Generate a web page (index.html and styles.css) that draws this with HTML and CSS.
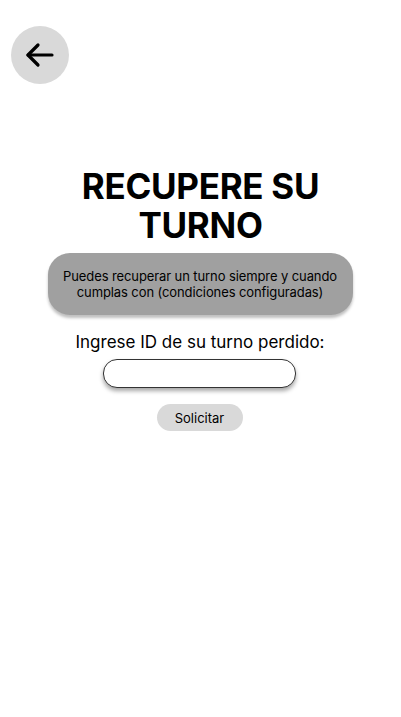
FILE: index.html
```html
<!DOCTYPE html>
<html lang="es">
<head>
<meta charset="utf-8">
<title>Recupere su turno</title>
<link rel="stylesheet" href="styles.css">
</head>
<body>
<div class="page">
  <header class="top">
    <button class="back" aria-label="Volver">
      <svg width="36" height="36" viewBox="0 0 36 36" fill="none" stroke="#000" stroke-width="3.2" stroke-linecap="round" stroke-linejoin="round">
        <path d="M30 18H6"/>
        <path d="M16 8L6 18l10 10"/>
      </svg>
    </button>
  </header>
  <main class="content">
    <h1 class="title">RECUPERE SU<br>TURNO</h1>
    <div class="info">Puedes recuperar un turno siempre y cuando<br>cumplas con (condiciones configuradas)</div>
    <label class="label" for="id">Ingrese ID de su turno perdido:</label>
    <input class="field" id="id" type="text">
    <button class="submit">Solicitar</button>
  </main>
</div>
</body>
</html>
```

FILE: styles.css
```css
* { box-sizing: border-box; }
html, body { margin: 0; padding: 0; background: #fff; }
body {
  font-family: Inter, "Noto Sans", sans-serif;
  color: #000;
  width: 401px;
  height: 717px;
  overflow: hidden;
}
.page { display: flex; flex-direction: column; }
.top { padding: 26px 0 0 11px; }
.back {
  width: 58px; height: 58px;
  border-radius: 50%;
  border: none;
  background: #d9d9d9;
  display: flex; align-items: center; justify-content: center;
  padding: 0;
}
.content {
  display: flex; flex-direction: column; align-items: center;
  padding-top: 83px;
}
.title {
  margin: 0;
  font-size: 35px;
  font-weight: 700;
  line-height: 39px;
  text-align: center;
  letter-spacing: -0.3px;
}
.info {
  margin-top: 8px;
  width: 305px;
  height: 62px;
  margin-left: -1px;
  background: #a0a0a0;
  border-radius: 22px;
  box-shadow: 0 3px 3px rgba(0,0,0,0.25);
  font-size: 13px;
  line-height: 16px;
  letter-spacing: -0.1px;
  white-space: nowrap;
  text-align: center;
  display: flex; align-items: center; justify-content: center;
  padding: 0 4px;
}
.label {
  margin-top: 16px;
  font-size: 17px;
  line-height: 22px;
  margin-left: -1px;
}
.field {
  margin-top: 6px;
  width: 193px;
  height: 29px;
  border: 1px solid #333;
  border-radius: 14px;
  background: #fff;
  box-shadow: 0 3px 4px rgba(0,0,0,0.35);
  outline: none;
  margin-left: -2px;
}
.submit {
  margin-top: 16px;
  width: 86px;
  height: 27px;
  border: none;
  border-radius: 14px;
  background: #d9d9d9;
  font-family: Inter, "Noto Sans", sans-serif;
  font-size: 13px;
  color: #000;
  padding: 0;
  margin-left: -2px;
}
```
